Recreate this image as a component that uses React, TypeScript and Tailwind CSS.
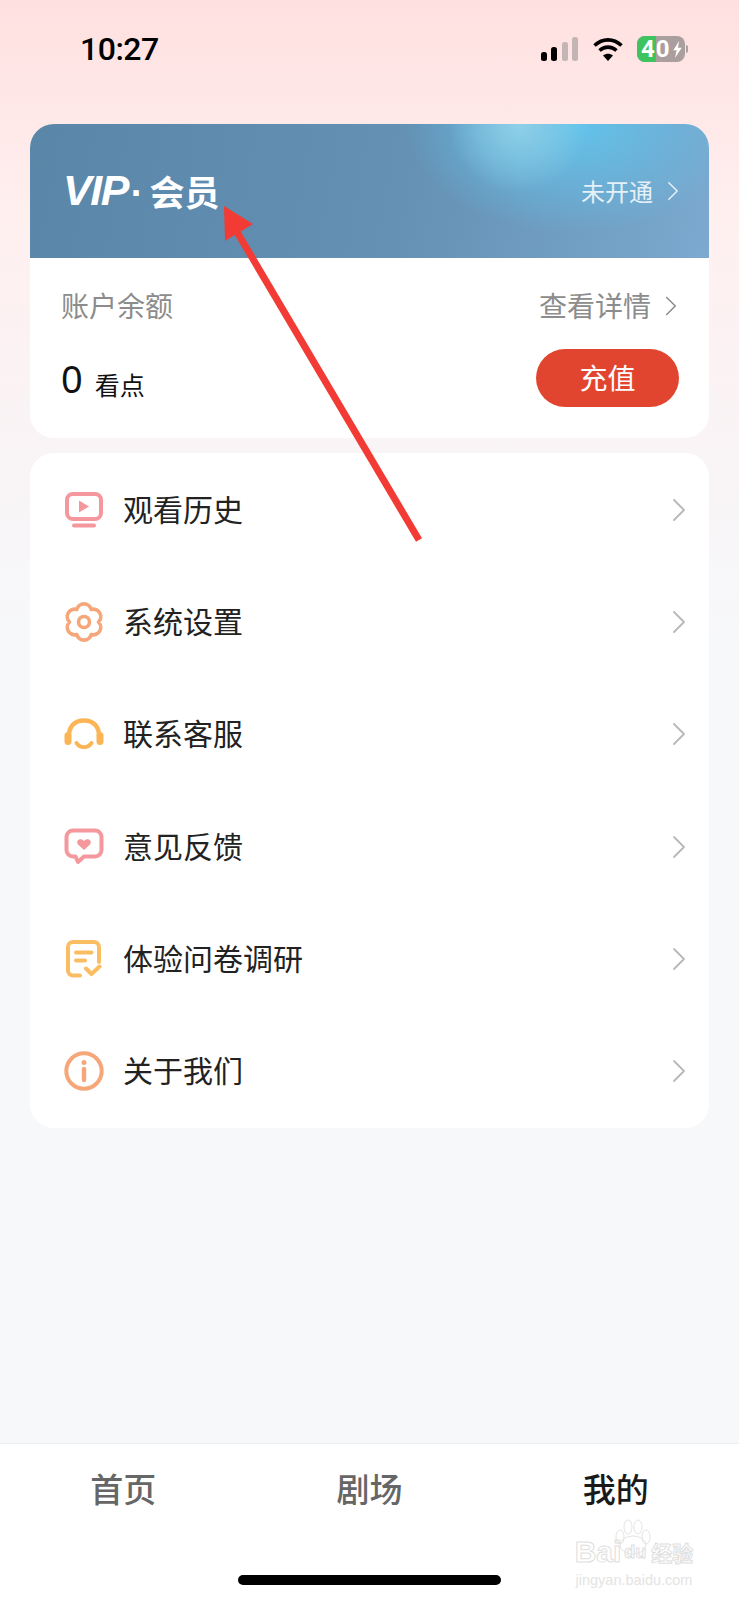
const cjk = "font-['Noto_Sans_CJK_SC','Noto_Sans',sans-serif]";

function Chevron({ className }: { className: string }) {
  return (
    <svg viewBox="0 0 14 24" className={className} fill="none" stroke="currentColor" strokeWidth="1.8">
      <path d="M2 2l10 10L2 22" strokeLinejoin="round" strokeLinecap="round" />
    </svg>
  );
}

function PlayIcon() {
  return (
    <svg viewBox="0 0 38 36" className="w-[38px] h-[36px]" fill="none">
      <rect x="2" y="2" width="34" height="25" rx="6" stroke="#f4989d" strokeWidth="4" />
      <path d="M14 8.500v12l10-6z" fill="#f4989d" />
      <rect x="7" y="31.500" width="24" height="4" rx="2" fill="#f4989d" />
    </svg>
  );
}

function GearIcon() {
  return (
    <svg viewBox="0 0 38 40" className="w-[38px] h-[40px]" fill="none" stroke="#f5a77a" strokeWidth="3.600">
      <path d="M33.500 20A7.500 7.500 0 0 0 26.250 7.440A7.500 7.500 0 0 0 11.750 7.440A7.500 7.500 0 0 0 4.500 20A7.500 7.500 0 0 0 11.750 32.560A7.500 7.500 0 0 0 26.250 32.560A7.500 7.500 0 0 0 33.500 20z" strokeLinejoin="round" />
      <circle cx="19" cy="20" r="5.500" />
    </svg>
  );
}

function HeadsetIcon() {
  return (
    <svg viewBox="0 0 40 32" className="w-[40px] h-[32px]" fill="none" stroke="#fbb554">
      <path d="M5 19C4.500 8 11 2.500 20 2.500S35.500 8 35 19" strokeWidth="4.400" />
      <rect x="0.500" y="14" width="7" height="13" rx="3.500" fill="#fbb554" stroke="none" />
      <rect x="32.500" y="14" width="7" height="13" rx="3.500" fill="#fbb554" stroke="none" />
      <path d="M12.500 25c3 5.500 12 5.500 15 0" strokeWidth="3.800" strokeLinecap="round" />
    </svg>
  );
}

function ChatHeartIcon() {
  return (
    <svg viewBox="0 0 40 38" className="w-[40px] h-[38px]" fill="none">
      <path d="M9 2.500h22a6.500 6.500 0 0 1 6.500 6.500v13a6.500 6.500 0 0 1-6.500 6.500H20l-6 5.500-2.500-5.500H9A6.500 6.500 0 0 1 2.500 22V9A6.500 6.500 0 0 1 9 2.500z" stroke="#f4989d" strokeWidth="4" strokeLinejoin="round" />
      <path d="M20 22l-6-5.500c-3-3.500 2.500-7.500 6-3.500 3.500-4 9 0 6 3.500z" fill="#f4989d" />
    </svg>
  );
}

function SurveyIcon() {
  return (
    <svg viewBox="0 0 36 38" className="w-[36px] h-[38px]" fill="none" stroke="#fbbd62" strokeWidth="4" strokeLinecap="round">
      <path d="M14 35.500H7a5 5 0 0 1-5-5V7a5 5 0 0 1 5-5h21a5 5 0 0 1 5 5v15" />
      <path d="M10 12.500h15.500M10 20.500h9" />
      <path d="M20 28.500l5.500 5.500L33.500 26.500" strokeLinejoin="round" />
    </svg>
  );
}

function InfoIcon() {
  return (
    <svg viewBox="0 0 40 40" className="w-[40px] h-[40px]" fill="none" stroke="#f5a77a">
      <circle cx="20" cy="20" r="17.700" strokeWidth="4" />
      <circle cx="20" cy="11.500" r="2.500" fill="#f5a77a" stroke="none" />
      <path d="M20 18v11" strokeWidth="4.400" strokeLinecap="round" />
    </svg>
  );
}

const menu = [
  { label: '观看历史', icon: <PlayIcon /> },
  { label: '系统设置', icon: <GearIcon /> },
  { label: '联系客服', icon: <HeadsetIcon /> },
  { label: '意见反馈', icon: <ChatHeartIcon /> },
  { label: '体验问卷调研', icon: <SurveyIcon /> },
  { label: '关于我们', icon: <InfoIcon /> },
];

function StatusBar() {
  return (
    <div className="h-[124px] pb-[26px] pl-[80px] pr-[51px] flex items-center justify-between">
      <span className="font-['Roboto',sans-serif] font-medium text-[32px] leading-none text-black tracking-[-0.5px]">10:27</span>
      <div className="flex items-center">
        <svg viewBox="0 0 37 24" className="w-[37px] h-[24px] mr-[15px]">
          <rect x="0" y="15" width="6" height="9" rx="2.500" fill="#000" />
          <rect x="10" y="10" width="6" height="14" rx="2.500" fill="#000" />
          <rect x="21" y="5" width="6" height="19" rx="2.500" fill="#c4b5b5" />
          <rect x="31" y="0" width="6" height="24" rx="2.500" fill="#c4b5b5" />
        </svg>
        <svg viewBox="0 0 30 24" className="w-[30px] h-[24px] mr-[14px]" fill="none" stroke="#000" strokeWidth="3.600">
          <path d="M1.500 8.500c8-7.500 19-7.500 27 0" />
          <path d="M6.500 13.500c5-4.500 12-4.500 17 0" />
          <path d="M15 24l-5-5.500c3-2.500 7-2.500 10 0z" fill="#000" stroke="none" />
        </svg>
        <div className="w-[48px] h-[26px] rounded-[8px] overflow-hidden flex bg-[#ab9e9e] relative">
          <div className="w-[19px] bg-[#3fc35f]" />
          <span className="absolute left-[4px] top-0 h-[26px] flex items-center font-['Roboto',sans-serif] font-bold text-[24px] text-white leading-none tracking-[1px]">40</span>
          <svg viewBox="0 0 12 20" className="absolute right-[2px] top-[5px] w-[11px] h-[17px]">
            <path d="M8 0L1 11h4l-2 9 8-12H6.500z" fill="#fff" />
          </svg>
        </div>
        <div className="w-[2px] h-[8px] ml-[1px] rounded-r bg-[#ab9e9e]" />
      </div>
    </div>
  );
}

export default function App() {
  return (
    <div className={`relative w-[739px] h-[1600px] overflow-hidden flex flex-col bg-[linear-gradient(180deg,#ffe0e0_0%,#fff0f0_14%,#f9f4f6_28%,#f7f8fa_40%,#f7f8fa_100%)] ${cjk}`}>
      <StatusBar />

      <main className="flex-1 px-[30px]">
        {/* 会员 + 余额 */}
        <section className="rounded-[24px] overflow-hidden bg-white">
          <div className="h-[134px] pl-[33px] pr-[30px] flex items-center justify-between bg-[radial-gradient(ellipse_70px_70px_at_72%_0%,#8fd0e8_0%,#8fd0e800_100%),radial-gradient(ellipse_170px_110px_at_80%_0%,#62c4ec_0%,#62c4ec00_100%),linear-gradient(100deg,#5a86a8_0%,#6491b4_55%,#7ba9cf_100%)]">
            <div className="flex items-center text-white font-bold pb-[2px]">
              <span className="text-[43px] leading-none italic font-['Liberation_Sans',sans-serif] tracking-[-1.500px]">VIP</span>
              <span className="text-[38px] leading-none font-['Liberation_Sans',sans-serif] ml-[3px] translate-y-[3px]">·</span>
              <span className="text-[35px] leading-none ml-[6px]">会员</span>
            </div>
            <div className="flex items-center text-[#e6f0f7]">
              <span className="text-[24px] leading-none">未开通</span>
              <Chevron className="w-[12px] h-[20px] ml-[14px]" />
            </div>
          </div>
          <div className="pt-[28px] pb-[31px] pl-[31px] pr-[30px]">
            <div className="h-[40px] flex items-center justify-between text-[#8c8c8c]">
              <span className="text-[28px] leading-none pb-[3px]">账户余额</span>
              <div className="flex items-center">
                <span className="text-[28px] leading-none pb-[2px]">查看详情</span>
                <Chevron className="w-[12px] h-[22px] ml-[14px] mr-[2px]" />
              </div>
            </div>
            <div className="mt-[23px] flex items-center justify-between">
              <div className="flex items-baseline text-[#111]">
                <span className="text-[38px] leading-none font-['Noto_Sans',sans-serif]">0</span>
                <span className="text-[25px] leading-none ml-[12px] translate-y-[2px]">看点</span>
              </div>
              <button className="w-[143px] h-[58px] rounded-full bg-[#e2452f] text-white text-[28px] leading-none pb-[2px]">充值</button>
            </div>
          </div>
        </section>

        {/* 菜单 */}
        <section className="mt-[15px] rounded-[24px] bg-white py-[1px]">
          {menu.map((item) => (
            <div key={item.label} className="h-[112.200px] flex items-center pl-[34px] pr-[23px]">
              <div className="w-[40px] flex justify-center">{item.icon}</div>
              <span className="ml-[19px] text-[30px] leading-none text-[#222] pb-[4px]">{item.label}</span>
              <Chevron className="ml-auto w-[14px] h-[24px] text-[#b8b8b8]" />
            </div>
          ))}
        </section>
      </main>

      <nav className="h-[157px] bg-white border-t border-[#eeeff1] pt-[22px]">
        <div className="grid grid-cols-3 text-[33px] leading-[44px] font-medium text-center text-[#666]">
          <span>首页</span>
          <span>剧场</span>
          <span className="text-[#1a1a1a]">我的</span>
        </div>
        <div className="mt-[65px] mx-auto w-[263px] h-[10px] rounded-full bg-black" />
      </nav>

      {/* 红色箭头标注 */}
      <svg viewBox="0 0 739 1600" className="absolute inset-0 w-[739px] h-[1600px] pointer-events-none">
        <path d="M237 232L419 540" stroke="#f23b34" strokeWidth="7" fill="none" />
        <path d="M224 206L253 224L225 241z" fill="#f23b34" />
      </svg>

      {/* 水印 */}
      <div className="absolute left-[568px] top-[1519px] w-[132px] flex flex-col items-center font-['Liberation_Sans',sans-serif] text-transparent pointer-events-none">
        <svg viewBox="0 0 40 36" className="w-[40px] h-[36px] absolute left-[45px] top-[0px]" fill="none" stroke="#e4e4e4" strokeWidth="1">
          <ellipse cx="7" cy="18" rx="4" ry="7" />
          <ellipse cx="15" cy="8" rx="4" ry="7" />
          <ellipse cx="25" cy="8" rx="4" ry="7" />
          <ellipse cx="33" cy="18" rx="4" ry="7" />
          <ellipse cx="20" cy="26" rx="13" ry="9" />
        </svg>
        <div className="mt-[16px] flex items-center text-[30px] leading-[34px] font-bold whitespace-nowrap [-webkit-text-stroke:1px_#e0e0e0]">
          Bai<span className="text-[18px] ml-[3px]">du</span><span className={`text-[21px] ml-[5px] ${cjk}`}>经验</span>
        </div>
        <div className="text-[14.500px] leading-[16px] mt-[3px] whitespace-nowrap text-[#e4e4e4]">jingyan.baidu.com</div>
      </div>
    </div>
  );
}
